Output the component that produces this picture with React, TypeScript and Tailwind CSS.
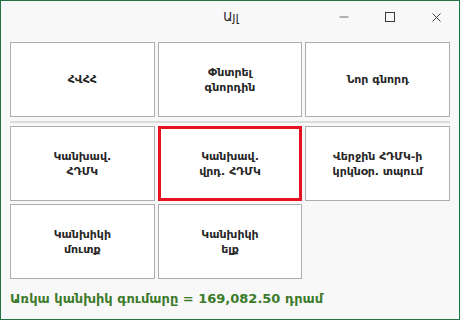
import { Minus, X } from "lucide-react";

const font = { fontFamily: '"DejaVu Sans", "Noto Sans", sans-serif' };

function Btn({
  lines,
  active,
}: {
  lines: string[];
  active?: boolean;
}) {
  return (
    <button
      className={`bg-white h-[75px] flex flex-col items-center justify-center text-[11px] font-bold leading-[15px] text-[#262626] ${
        active ? "border-[3px] border-[#e81123]" : "border border-[#adadad]"
      }`}
    >
      {lines.map((l) => (
        <span key={l}>{l}</span>
      ))}
    </button>
  );
}

export default function App() {
  return (
    <div
      className="w-[460px] h-[320px] bg-[#f8f8f8] border border-[#217346] flex flex-col overflow-hidden"
      style={font}
    >
      <div className="h-[32px] flex items-center relative shrink-0">
        <div className="flex-1 text-center text-[12px] text-[#1f1f1f] pl-[2px]">Այլ</div>
        <div className="absolute right-0 top-0 h-full flex items-center">
          <div className="w-[46px] flex justify-center text-[#3a3a3a]">
            <Minus size={14} strokeWidth={1.3} />
          </div>
          <div className="w-[46px] flex justify-center">
            <div className="w-[10px] h-[10px] border border-[#3a3a3a]" />
          </div>
          <div className="w-[46px] flex justify-center text-[#3a3a3a]">
            <X size={15} strokeWidth={1.5} />
          </div>
        </div>
      </div>
      <div className="px-[9px] pt-[9px] flex flex-col">
        <div className="grid grid-cols-3 gap-[3px]">
          <Btn lines={["ՀՎՀՀ"]} />
          <Btn lines={["Փնտրել", "գնորդին"]} />
          <Btn lines={["Նոր գնորդ"]} />
        </div>
        <div className="h-[2px] bg-[#dcdcdc] mt-[4px] mb-[3px]" />
        <div className="grid grid-cols-3 gap-[3px]">
          <Btn lines={["Կանխավ.", "ՀԴՄԿ"]} />
          <Btn lines={["Կանխավ.", "վրդ. ՀԴՄԿ"]} active />
          <Btn lines={["Վերջին ՀԴՄԿ-ի", "կրկնօր. տպում"]} />
          <Btn lines={["Կանխիկի", "մուտք"]} />
          <Btn lines={["Կանխիկի", "ելք"]} />
        </div>
        <div className="mt-[10px] text-[13px] font-bold text-[#3c7a2b]">
          Առկա կանխիկ գումարը = 169,082.50 դրամ
        </div>
      </div>
    </div>
  );
}
